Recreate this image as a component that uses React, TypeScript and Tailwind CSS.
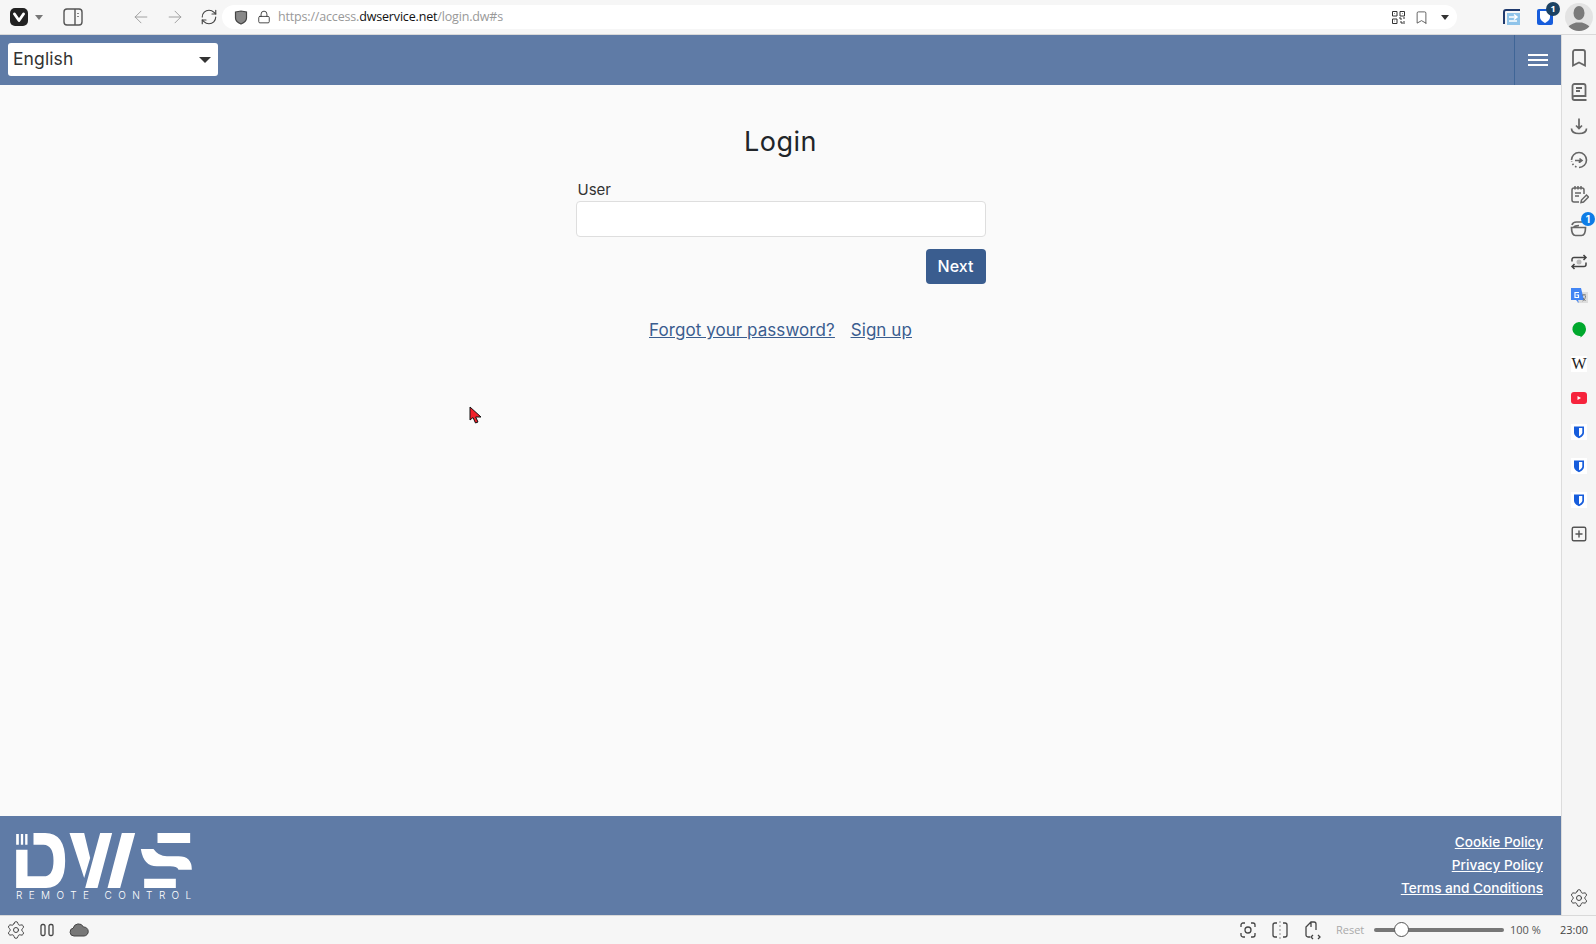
import React from "react";
import { ArrowLeft, ArrowRight, Bookmark, Lock, RefreshCw, Settings, SquarePlus } from "lucide-react";

const Shield = () => (
  <svg width="16" height="16" viewBox="0 0 16 16">
    <rect width="16" height="16" fill="#fff" />
    <path d="M3 2.500h10v6c0 3-2.500 4.600-5 5.800-2.500-1.200-5-2.800-5-5.800z" fill="#175ddc" />
    <path d="M8 4v8.300c1.800-1 3.300-2.200 3.300-4V4z" fill="#fff" />
  </svg>
);

const sideIcons = [
  <svg key="bm" width="18" height="20" viewBox="0 0 18 20" fill="none" stroke="#666" strokeWidth="1.800">
    <path d="M5 2h8a2 2 0 0 1 2 2v13.500L9 14.500l-6 3V4a2 2 0 0 1 2-2z" />
  </svg>,
  <svg key="notes" width="18" height="20" viewBox="0 0 18 20" fill="none" stroke="#666" strokeWidth="1.800">
    <path d="M2.500 15.500V4a2 2 0 0 1 2-2h9a2 2 0 0 1 2 2v10H4.500a2 2 0 0 0-2 2 2 2 0 0 0 2 2h12" />
    <path d="M6 6h6M6 9h4" />
  </svg>,
  <svg key="dl" width="18" height="18" viewBox="0 0 18 18" fill="none" stroke="#666" strokeWidth="1.700">
    <path d="M9 1.500v9.500M6 8.500 9 11.500 12 8.500M1.500 11.500c0 3.500 3 5 7.500 5s7.500-1.500 7.500-5" />
  </svg>,
  <svg key="hist" width="18" height="18" viewBox="0 0 18 18" fill="none" stroke="#666" strokeWidth="1.600">
    <path d="M1.500 9a7.500 7.500 0 1 1 7.500 7.500" />
    <path d="M6.500 16.100 5 15.200M3.400 14 2.500 12.700M1.700 10.800v-.500" />
    <path d="M5 9.500h7M9.500 7.500 12 9.500 9.500 11.500M9.500 9.500V12" />
  </svg>,
  <svg key="cal" width="19" height="19" viewBox="0 0 19 19" fill="none" stroke="#666" strokeWidth="1.500">
    <path d="M9 17H4a2 2 0 0 1-2-2V5a2 2 0 0 1 2-2h8a2 2 0 0 1 2 2v4M5 1v3.500M8 1v3.500M11 1v3.500M5 8h6M5 11h4" />
    <path d="M11 17.500l.5-2.500 5-5 2 2-5 5z" />
  </svg>,
  <svg key="mail" width="18" height="18" viewBox="0 0 18 18" fill="none" stroke="#666" strokeWidth="1.700">
    <path d="M1.500 8.500h14c0 5-1.500 8-4 8h-6c-2.500 0-4-3-4-8zM2 6c.5-2 2-3 4.500-3H12M3.500 8.500c1-1.500 3-2 5.500-2" />
  </svg>,
  <svg key="sync" width="18" height="18" viewBox="0 0 18 18" fill="none" stroke="#444" strokeWidth="1.500">
    <path d="M2 8.500V6.500a2 2 0 0 1 2-2h12M13.500 2l2.500 2.500L13.500 7M16 9.500v2a2 2 0 0 1-2 2H2M4.500 11 2 13.500 4.500 16" />
    <circle cx="9" cy="9" r="2.500" fill="#bbb" stroke="none" />
  </svg>,
  <svg key="tr" width="18" height="18" viewBox="0 0 18 18">
    <rect x="7" y="5" width="11" height="11" fill="#ddd" />
    <path d="M1 1h10l3 12H8l1 3-3-3H1z" fill="#4285f4" />
    <path d="M9 5.500H5v5h3.500V8H6.500" fill="none" stroke="#fff" strokeWidth="1.200" />
    <path d="M12 8h4M14 7v1M12.500 14c2-1 3-3 3-5M13 11l2.500 3" fill="none" stroke="#666" strokeWidth=".8" />
  </svg>,
  <svg key="chat" width="16" height="18" viewBox="0 0 16 18">
    <path d="M8 1a7 7 0 0 1 7 7c0 4-3 6.500-5.500 8.500v-1.600A7 7 0 1 1 8 1z" fill="#00a82d" />
  </svg>,
  <span key="wiki" className="flex h-4 w-4 items-center justify-center bg-white font-['Liberation_Serif',serif] text-[16px] leading-none text-[#222]">
    W
  </span>,
  <svg key="yt" width="16" height="12" viewBox="0 0 16 12">
    <rect width="16" height="12" rx="3" fill="#f6233c" />
    <path d="M6.500 4v4L10 6z" fill="#fff" />
  </svg>,
  <Shield key="s1" />,
  <Shield key="s2" />,
  <Shield key="s3" />,
  <SquarePlus key="add" size={18} strokeWidth={1.900} color="#555" />,
];

const Sidebar = () => (
  <aside className="flex w-[35px] flex-col items-center border-l border-[#dcdcdc] bg-[#f5f5f5] pt-[6px] pb-[5px]">
    {sideIcons.map((icon, index) => (
      <div key={index} className="relative flex h-[34px] w-full items-center justify-center">
        {icon}
        {index === 5 && (
          <span className="absolute top-[1px] right-[1px] flex h-[14px] w-[14px] items-center justify-center rounded-full bg-[#0d7ce6] text-[10px] font-bold text-white">
            1
          </span>
        )}
      </div>
    ))}
    <div className="mt-auto flex h-[24px] items-center justify-center">
      <Settings size={20} strokeWidth={1.200} color="#444" />
    </div>
  </aside>
);

const TopBar = () => (
  <div className="flex h-[35px] items-center border-b border-[#d9d9d9] bg-[#f6f6f6] font-['Open_Sans',sans-serif]">
    <div className="ml-[10px] flex h-[18px] w-[18px] items-center justify-center rounded-[5px] bg-[#222]">
      <svg width="12" height="10" viewBox="0 0 12 10">
        <path d="M1.500 2 6 8.500 10.500 2" fill="none" stroke="#fff" strokeWidth="2.800" strokeLinecap="round" strokeLinejoin="round" />
      </svg>
    </div>
    <div className="ml-[7px] h-0 w-0 border-x-[4px] border-t-[5px] border-x-transparent border-t-[#777]" />
    <svg className="ml-[20px]" width="20" height="18" viewBox="0 0 20 18" fill="none" stroke="#555" strokeWidth="1.400">
      <rect x="1" y="1" width="18" height="16" rx="3" />
      <path d="M12 1v16" />
      <path d="M15 5v1M15 8v1" />
    </svg>
    <ArrowLeft className="ml-[48px]" size={20} strokeWidth={1.100} color="#999" />
    <ArrowRight className="ml-[14px]" size={20} strokeWidth={1.100} color="#999" />
    <RefreshCw className="ml-[15px]" size={18} strokeWidth={1.500} color="#444" />
    <div className="ml-[4px] flex h-[24px] w-[1235px] items-center rounded-full bg-white">
      <svg className="ml-[12px]" width="14" height="15" viewBox="0 0 14 15">
        <path d="M1.500 2 7 1l5.500 1v6c0 3-3 5-5.500 6-2.500-1-5.500-3-5.500-6z" fill="#888" stroke="#444" strokeWidth="1.200" />
      </svg>
      <Lock className="ml-[9px]" size={14} strokeWidth={1.500} color="#333" />
      <span className="ml-[7px] text-[12.500px] tracking-[-0.17px] text-[#999]">
        https://access.<span className="text-[#111]">dwservice.net</span>/login.dw#s
      </span>
      <div className="ml-auto flex items-center">
        <svg width="13" height="13" viewBox="0 0 13 13" fill="none" stroke="#333" strokeWidth="1">
          <path d="M.5.5h4.500v4.500H.5zM8 .5h4.500v4.500H8zM.5 8h4.500v4.500H.5zM2.500 2.500h.5M10 2.500h.5M2.500 10h.5M7 7h2v2M11 7h2M8 11h2v2M12 10v3" />
        </svg>
        <Bookmark className="ml-[9px]" size={15} strokeWidth={1.300} color="#444" />
        <div className="mr-[8px] ml-[12px] h-0 w-0 border-x-[4px] border-t-[5px] border-x-transparent border-t-[#333]" />
      </div>
    </div>
    <svg className="ml-[46px]" width="18" height="17" viewBox="0 0 18 17">
      <path d="M1 15V3a2 2 0 0 1 2-2h14" fill="none" stroke="#1f3a6e" strokeWidth="2" />
      <rect x="4" y="4" width="13" height="12" fill="#8fc4ea" />
      <path d="M6 8h8M11 5.500 14 8l-3 2.500M14 12H6" fill="none" stroke="#fff" strokeWidth="1.500" />
    </svg>
    <div className="relative ml-[16px] h-[16px] w-[16px] rounded-[2px] bg-[#175ddc]">
      <svg width="16" height="16" viewBox="0 0 16 16">
        <path d="M3 2h10v6c0 3-2.500 4.500-5 6-2.500-1.500-5-3-5-6z" fill="#fff" />
      </svg>
      <span className="absolute -top-[7px] -right-[7px] flex h-[14px] w-[14px] items-center justify-center rounded-full bg-[#1c4263] text-[9px] font-bold text-white">
        1
      </span>
    </div>
    <div className="relative ml-[12px] h-[28px] w-[28px] overflow-hidden rounded-full bg-[#e3e3e3]">
      <svg width="28" height="28" viewBox="0 0 28 28" fill="#7a7a7a">
        <ellipse cx="14" cy="10" rx="5.500" ry="7" />
        <path d="M2 28c0-6 6-7 9-8.500h6c3 1.500 9 2.500 9 8.500z" />
      </svg>
    </div>
  </div>
);

const Header = () => (
  <header className="flex h-[50px] items-start justify-between bg-[#5f7ba6]">
    <div className="mt-[8px] ml-[8px] flex h-[33px] w-[210px] items-center justify-between rounded-[3px] bg-white pr-[7px] pl-[5px]">
      <span className="text-[17.500px] tracking-[0.1px] text-[#333]">English</span>
      <div className="h-0 w-0 border-x-[6.500px] border-t-[6px] border-x-transparent border-t-[#333]" />
    </div>
    <div className="flex h-full w-[47px] items-center justify-center border-l border-[#3f6596]">
      <div className="flex w-[20px] flex-col gap-[3px]">
        <div className="h-[2px] bg-white" />
        <div className="h-[2px] bg-white" />
        <div className="h-[2px] bg-white" />
      </div>
    </div>
  </header>
);

const LoginForm = () => (
  <main className="flex flex-1 flex-col items-center bg-[#fafafa]">
    <h1 className="mt-[39px] text-[27px] leading-[36px] tracking-[0.5px] text-[#212529]">Login</h1>
    <div className="mt-[20px] w-[410px]">
      <label className="ml-[2px] block text-[15px] leading-[20px] text-[#333]">User</label>
      <input className="mt-[1px] block h-[36px] w-full rounded-[4px] border border-[#dedede] bg-white" />
      <div className="mt-[12px] flex justify-end">
        <button className="h-[35px] w-[60px] rounded-[4px] bg-[#3a5d8f] pb-[2px] text-[16px] font-medium text-white">
          Next
        </button>
      </div>
    </div>
    <div className="mt-[35px] flex gap-[16px] text-[17px] leading-[22px] tracking-[0.06px] text-[#3a5d8f] underline">
      <a href="#">Forgot your password?</a>
      <a href="#">Sign up</a>
    </div>
  </main>
);

const Footer = () => (
  <footer className="flex h-[99px] items-start justify-between bg-[#5f7ba6] pt-[16px] pr-[18px] pl-[16px]">
    <div className="mt-[1px] flex flex-col">
      <svg width="176" height="55" viewBox="18 15 527 165" fill="#fff">
        <path d="M18 18h8v32h-8zM32 18h7v32h-7zM45 18h7v32h-7z" />
        <path d="M70 15h35q60 0 60 83t-60 82H18V65h34v80h48q30 0 30-47t-30-48H70z" />
        <path d="M178 15h44l18 75-18 60zM270 15h36l-44 165h-37zM335 15h40l-45 165h-38z" />
        <path d="M442 15h98v30h-98zM392 63h38q15 22 40 22h35q40 0 40 40h-40q-5-10-25-10h-40q-40 0-48-52zM402 152h95v28h-95z" />
      </svg>
      <span className="mt-[1px] text-[10px] leading-[12px] font-light tracking-[6.400px] whitespace-nowrap text-white">
        REMOTE CONTROL
      </span>
    </div>
    <div className="flex flex-col items-end gap-[3px] text-[13.600px] leading-[20px] font-medium text-white underline">
      <a href="#">Cookie Policy</a>
      <a href="#">Privacy Policy</a>
      <a href="#">Terms and Conditions</a>
    </div>
  </footer>
);

const StatusBar = () => (
  <div className="flex h-[29px] items-center border-t border-[#d9d9d9] bg-[#f6f6f6] font-['Open_Sans',sans-serif] text-[11px] text-[#555]">
    <Settings className="ml-[6px]" size={20} strokeWidth={1.200} color="#444" />
    <svg className="ml-[13px]" width="16" height="14" viewBox="0 0 16 14" fill="none" stroke="#444" strokeWidth="1.300">
      <rect x="2" y="1.500" width="4" height="11" rx="1.500" />
      <rect x="10" y="1.500" width="4" height="11" rx="1.500" />
    </svg>
    <svg className="ml-[14px]" width="20" height="14" viewBox="0 0 20 14">
      <path d="M5 13a4 4 0 0 1-.8-7.900A5.500 5.500 0 0 1 14.500 4 4.500 4.500 0 0 1 15 13z" fill="#777" stroke="#444" />
    </svg>
    <div className="ml-auto flex items-center">
      <svg width="18" height="18" viewBox="0 0 18 18" fill="none" stroke="#444" strokeWidth="1.300">
        <circle cx="9" cy="9" r="3" />
        <path d="M2 6V4a2 2 0 0 1 2-2h2M12 2h2a2 2 0 0 1 2 2v2M16 12v2a2 2 0 0 1-2 2h-2M6 16H4a2 2 0 0 1-2-2v-2" />
      </svg>
      <svg className="ml-[13px]" width="20" height="20" viewBox="0 0 20 20" fill="none" stroke="#444" strokeWidth="1.300">
        <path d="M7 3H5a2 2 0 0 0-2 2v10a2 2 0 0 0 2 2h2M13 3h2a2 2 0 0 1 2 2v10a2 2 0 0 1-2 2h-2" />
        <path d="M10 1v18" stroke="#aaa" strokeDasharray="2 2" />
      </svg>
      <svg className="ml-[14px]" width="18" height="20" viewBox="0 0 18 20" fill="none" stroke="#444" strokeWidth="1.300">
        <path d="M6 17H4a2 2 0 0 1-2-2V7l5-5h3a2 2 0 0 1 2 2v6M7 2v5M9 15l-2 2 2 2M14 15l2 2-2 2" />
      </svg>
      <span className="ml-[14px] w-[38px] text-[#aaa]">Reset</span>
      <div className="relative h-[4px] w-[130px] rounded-full bg-[#777]">
        <div className="absolute -top-[6px] left-[20px] h-[15px] w-[15px] rounded-full border border-[#555] bg-white" />
      </div>
      <span className="ml-[6px] w-[50px]">100 %</span>
      <span className="mr-[8px] text-[#444]">23:00</span>
    </div>
  </div>
);

const App = () => {
  return (
    <div className="relative flex h-[944px] w-[1596px] flex-col overflow-hidden font-['Inter',sans-serif]">
      <TopBar />
      <div className="flex min-h-0 flex-1">
        <div className="flex w-[1561px] flex-col">
          <Header />
          <LoginForm />
          <Footer />
        </div>
        <Sidebar />
      </div>
      <StatusBar />
      {/* mouse cursor from the screen capture */}
      <svg className="absolute top-[406px] left-[469px]" width="14" height="20" viewBox="0 0 14 20">
        <path d="M1 1v13l3-2.500L6.500 17l2.500-1-2.300-5H12z" fill="#f0202a" stroke="#111" strokeWidth="1" />
      </svg>
    </div>
  );
};

export default App;
